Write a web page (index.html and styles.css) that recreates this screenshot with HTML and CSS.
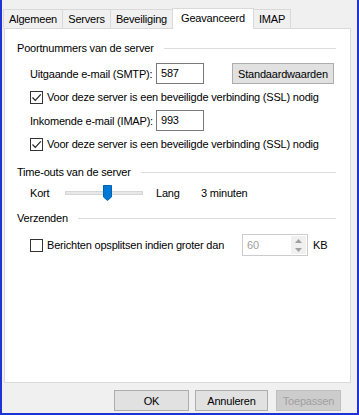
FILE: index.html
```html
<!DOCTYPE html>
<html lang="nl">
<head>
  <meta charset="UTF-8">
  <title>Geavanceerd</title>
  <link rel="stylesheet" href="styles.css">
</head>
<body>
  <div class="window">
    <div class="tabs">
      <div class="tab t-algemeen">Algemeen</div>
      <div class="tab t-servers">Servers</div>
      <div class="tab t-beveiliging">Beveiliging</div>
      <div class="tab active">Geavanceerd</div>
      <div class="tab t-imap">IMAP</div>
    </div>

    <div class="panel">
      <!-- Poortnummers -->
      <div class="group-title"><span>Poortnummers van de server</span><i></i></div>
      <div class="row port-row first">
        <span class="label">Uitgaande e-mail (SMTP):</span>
        <div class="textbox">587</div>
        <button class="btn defaults">Standaardwaarden</button>
      </div>
      <div class="row check-row">
        <span class="check on"><svg width="11" height="11" viewBox="0 0 11 11"><path d="M1.5 5.5 L4.3 8.3 L9.8 2.3" fill="none" stroke="#222" stroke-width="1.2"/></svg></span>
        <span>Voor deze server is een beveiligde verbinding (SSL) nodig</span>
      </div>
      <div class="row port-row">
        <span class="label">Inkomende e-mail (IMAP):</span>
        <div class="textbox">993</div>
      </div>
      <div class="row check-row">
        <span class="check on"><svg width="11" height="11" viewBox="0 0 11 11"><path d="M1.5 5.5 L4.3 8.3 L9.8 2.3" fill="none" stroke="#222" stroke-width="1.2"/></svg></span>
        <span>Voor deze server is een beveiligde verbinding (SSL) nodig</span>
      </div>

      <!-- Time-outs -->
      <div class="group-title second"><span>Time-outs van de server</span><i></i></div>
      <div class="row slider-row">
        <span class="kort">Kort</span>
        <div class="slider">
          <div class="track"></div>
          <svg class="thumb" width="9" height="16" viewBox="0 0 9 16"><path d="M0.5 0.5 H8.5 V12 L4.5 15.5 L0.5 12 Z" fill="#0078d7" stroke="#0063b1"/></svg>
        </div>
        <span class="lang">Lang</span>
        <span>3 minuten</span>
      </div>

      <!-- Verzenden -->
      <div class="group-title third"><span>Verzenden</span><i></i></div>
      <div class="row split-row">
        <span class="check"></span>
        <span class="split-label">Berichten opsplitsen indien groter dan</span>
        <div class="spin">
          <span class="spin-value">60</span>
          <div class="spin-arrows">
            <svg width="7" height="4" viewBox="0 0 7 4"><path d="M0 4 L3.5 0 L7 4 Z" fill="#a0a0a0"/></svg>
            <svg width="7" height="4" viewBox="0 0 7 4"><path d="M0 0 L3.5 4 L7 0 Z" fill="#a0a0a0"/></svg>
          </div>
        </div>
        <span class="kb">KB</span>
      </div>
    </div>

    <div class="footer">
      <button class="btn ok">OK</button>
      <button class="btn cancel">Annuleren</button>
      <button class="btn disabled">Toepassen</button>
    </div>
  </div>
</body>
</html>
```

FILE: styles.css
```css
/* venster */
html, body {
  margin: 0;
  padding: 0;
}
body {
  font-family: 'Liberation Sans', Arial, sans-serif;
  font-size: 11px;
  letter-spacing: -0.2px;
  color: #000;
  background: #fff;
  white-space: nowrap;
}
.window {
  width: 355px;
  height: 413px;
  background: #f0f0f0;
  border: 2px solid #1f33d4;
  border-top: none;
  display: flex;
  flex-direction: column;
}

/* tabbladen */
.tabs {
  display: flex;
  align-items: flex-end;
  padding: 8px 0 0 1px;
  height: 20px;
}
.tab {
  box-sizing: border-box;
  height: 19px;
  line-height: 19px;
  text-align: center;
  background: #f0f0f0;
  border: 1px solid #d9d9d9;
  border-bottom: none;
  margin-right: -1px;
}
.t-algemeen { width: 60px; }
.t-servers { width: 49px; }
.t-beveiliging { width: 63px; }
.t-imap { width: 38px; }
.tab.active {
  width: 82px;
  height: 21px;
  line-height: 19px;
  background: #fff;
  margin-bottom: -1px;
  position: relative;
  z-index: 1;
}

.panel {
  margin: 0 6px 0 2px;
  height: 353px;
  background: #fff;
  border: 1px solid #d9d9d9;
  padding: 0 14px 0 12px;
}

/* groepen */
.group-title {
  display: flex;
  align-items: center;
  height: 16px;
  margin-top: 11px;
}
.group-title i {
  flex: 1;
  height: 1px;
  background: #dcdcdc;
  margin-left: 10px;
}
.group-title.second { margin-top: 12px; }
.group-title.third { margin-top: 8px; }

.row {
  display: flex;
  align-items: center;
  padding-left: 13px;
}
.port-row {
  height: 21px;
  margin-top: 5px;
}
.port-row.first {
  margin-top: 7px;
}
.port-row .label {
  width: 126px;
}
.textbox {
  width: 42px;
  height: 19px;
  line-height: 19px;
  border: 1px solid #7a7a7a;
  padding-left: 4px;
  background: #fff;
}
.btn {
  font-family: inherit;
  font-size: 11px;
  letter-spacing: -0.2px;
  height: 21px;
  padding: 0;
  background: #e1e1e1;
  border: 1px solid #adadad;
  color: #000;
}
.defaults {
  margin-left: 28px;
  width: 102px;
}
.check-row {
  height: 16px;
  margin-top: 5px;
}
.check {
  width: 11px;
  height: 11px;
  border: 1px solid #333;
  background: #fff;
  margin-right: 4px;
  display: flex;
}

/* schuifregelaar */
.slider-row {
  margin-top: 4px;
  height: 18px;
}
.kort {
  width: 35px;
}
.slider {
  position: relative;
  width: 78px;
  height: 18px;
  display: flex;
  align-items: center;
}
.track {
  width: 100%;
  height: 2px;
  background: #e7e7e7;
  border: 1px solid #d6d6d6;
}
.thumb {
  position: absolute;
  left: 38px;
  top: 1px;
}
.lang {
  margin-left: 13px;
  width: 45px;
}

/* verzenden */
.split-row {
  margin-top: 8px;
  height: 22px;
}
.split-label {
  width: 195px;
}
.spin {
  width: 64px;
  height: 20px;
  border: 1px solid #cccccc;
  display: flex;
  align-items: center;
  justify-content: space-between;
  background: #fff;
}
.spin-value {
  padding-left: 4px;
  color: #a0a0a0;
}
.spin-arrows {
  width: 15px;
  height: 18px;
  margin-right: 1px;
  background: #f0f0f0;
  display: flex;
  flex-direction: column;
  justify-content: space-around;
  align-items: center;
}
.kb {
  margin-left: 5px;
}

/* knoppen onderaan */
.footer {
  display: flex;
  justify-content: flex-end;
  padding: 7px 16px 0 0;
}
.footer .ok {
  width: 75px;
}
.footer .cancel {
  width: 73px;
  margin-left: 6px;
}
.footer .btn.disabled {
  color: #a0a0a0;
  background: #cccccc;
  border-color: #bfbfbf;
  width: 65px;
  margin-left: 8px;
}
```
